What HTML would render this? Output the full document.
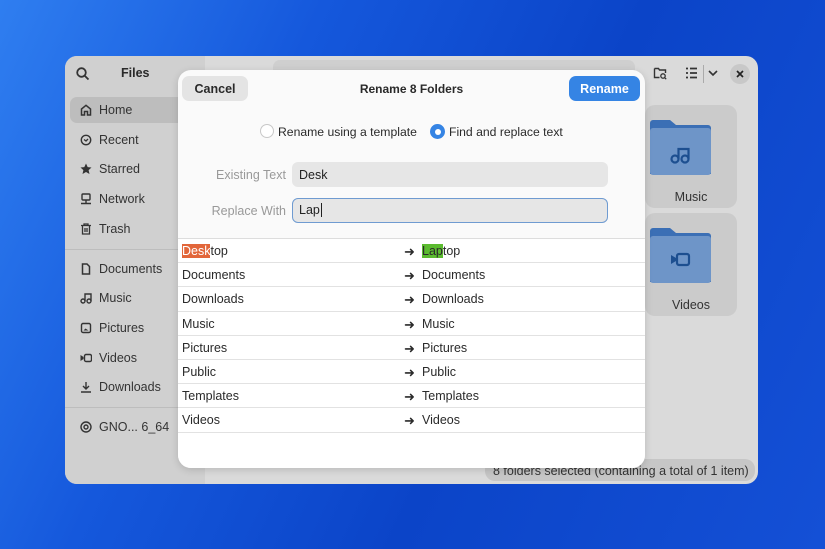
<!DOCTYPE html>
<html><head><style>
*{box-sizing:border-box;margin:0;padding:0}
body{width:825px;height:549px;overflow:hidden;font-family:"Liberation Sans",sans-serif;background:linear-gradient(115deg,#2f7ef0 0%,#1558dc 30%,#0b44c8 60%,#1450d6 100%);position:relative;font-size:12.5px;color:#2a2a2a}
.win{position:absolute;left:65px;top:56px;width:693px;height:428px;border-radius:12px;background:#dadada;overflow:hidden}
.side{position:absolute;left:0;top:0;width:140px;height:100%;background:#d0d0d0}
.si{position:absolute;left:34px;font-size:12.5px;color:#333}
.ic{position:absolute;left:15px;width:12px;height:12px}
.sep{position:absolute;left:0;width:140px;height:1px;background:#bdbdbd}
.tile{position:absolute;left:580px;width:92px;height:103px;border-radius:10px;background:#cbcbcb}
.fold{position:absolute;left:5px;top:12px;width:61px;height:60px}
.tl{position:absolute;width:100%;text-align:center;top:85px;font-size:12.5px;color:#333}
.dlg{position:absolute;left:178px;top:70px;width:467px;height:398px;border-radius:13px;background:#fafafa;overflow:hidden;box-shadow:0 2px 8px rgba(0,0,0,.15)}
.btn{position:absolute;top:6px;height:25px;border-radius:7px;font-weight:bold;font-size:12.5px;text-align:center;line-height:26px}
.lbl{position:absolute;width:108px;text-align:right;color:#999;font-size:12.5px}
.ent{position:absolute;left:114px;width:316px;height:25px;border-radius:6px;background:#e6e6e6;padding-left:7px;line-height:26px;font-size:12.5px;color:#222}
.list{position:absolute;left:0;top:168px;width:467px;height:230px;background:#fff;border-top:1px solid #ddd}
.row{height:24.2px;border-bottom:1px solid #e2e2e2;position:relative;line-height:25px}
.row .a{position:absolute;left:4px}.row .ar{position:absolute;left:226px;font-size:13px}.row .b{position:absolute;left:244px}
</style></head><body>
<div class="win">
<div class="side">
<svg style="position:absolute;left:11px;top:11px" width="14" height="14" viewBox="0 0 14 14"><circle cx="5.5" cy="5.5" r="4.3" fill="none" stroke="#333" stroke-width="1.8"/><path d="M8.6 8.6L12.5 12.5" stroke="#333" stroke-width="1.8"/></svg>
<div style="position:absolute;left:56px;top:10px;font-weight:bold;font-size:12.5px">Files</div>
<div style="position:absolute;left:5px;top:41px;width:135px;height:26px;border-radius:7px;background:#bdbdbd"></div>
<svg class="ic" style="top:48px" viewBox="0 0 12 12"><path d="M1.5 11V5L6 1.3 10.5 5V11H7.5V7.5h-3V11z" fill="none" stroke="#333" stroke-width="1.5"/></svg><div class="si" style="top:47px">Home</div>
<svg class="ic" style="top:78px" viewBox="0 0 12 12"><circle cx="6" cy="6" r="4.7" fill="none" stroke="#333" stroke-width="1.4"/><path d="M4 5.5l2 1.5 2-2" fill="none" stroke="#333" stroke-width="1.3"/></svg><div class="si" style="top:77px">Recent</div>
<svg class="ic" style="top:107px" viewBox="0 0 12 12"><path d="M6 .5l1.7 3.6 3.8.4-2.9 2.6.9 3.9L6 9 2.5 11l.9-3.9L.5 4.5l3.8-.4z" fill="#333"/></svg><div class="si" style="top:106px">Starred</div>
<svg class="ic" style="top:137px" viewBox="0 0 12 12"><rect x="2" y="1" width="8" height="6" rx="1" fill="none" stroke="#333" stroke-width="1.4"/><path d="M6 7v3M1 10.5h10" stroke="#333" stroke-width="1.4"/></svg><div class="si" style="top:136px">Network</div>
<svg class="ic" style="top:167px" viewBox="0 0 12 12"><path d="M1 2.5h10M4 2.5V1h4v1.5M2.5 3v8h7V3M5 5v4M7 5v4" fill="none" stroke="#333" stroke-width="1.3"/></svg><div class="si" style="top:166px">Trash</div>
<div class="sep" style="top:193px"></div>
<svg class="ic" style="top:207px" viewBox="0 0 12 12"><path d="M2.5 1h4.5l2.5 2.5V11h-7z" fill="none" stroke="#333" stroke-width="1.5"/></svg><div class="si" style="top:206px">Documents</div>
<svg class="ic" style="top:236px" viewBox="0 0 12 12"><circle cx="3" cy="9" r="2" fill="none" stroke="#333" stroke-width="1.4"/><circle cx="9" cy="9" r="2" fill="none" stroke="#333" stroke-width="1.4"/><path d="M5 9V2h6v7" fill="none" stroke="#333" stroke-width="1.4"/></svg><div class="si" style="top:235px">Music</div>
<svg class="ic" style="top:266px" viewBox="0 0 12 12"><rect x="1.5" y="1.5" width="9" height="9" rx="1.5" fill="none" stroke="#333" stroke-width="1.4"/><path d="M3.5 8.5l2-2 3 2z" fill="#333"/></svg><div class="si" style="top:265px">Pictures</div>
<svg class="ic" style="top:296px" viewBox="0 0 12 12"><rect x="4.5" y="2.5" width="7" height="7" rx="1.5" fill="none" stroke="#333" stroke-width="1.4"/><path d="M0.5 3v6l3-2V5z" fill="#333"/></svg><div class="si" style="top:295px">Videos</div>
<svg class="ic" style="top:325px" viewBox="0 0 12 12"><path d="M6 1v7M3 5l3 3 3-3M1 11h10" fill="none" stroke="#333" stroke-width="1.4"/></svg><div class="si" style="top:324px">Downloads</div>
<div class="sep" style="top:351px"></div>
<svg class="ic" style="top:365px" viewBox="0 0 12 12"><circle cx="6" cy="6" r="5" fill="none" stroke="#333" stroke-width="1.4"/><circle cx="6" cy="6" r="2" fill="none" stroke="#333" stroke-width="1.4"/></svg><div class="si" style="top:364px">GNO... 6_64</div>
</div>
<div style="position:absolute;left:208px;top:4px;width:362px;height:26px;border-radius:7px;background:#cfcfcf"></div>
<svg style="position:absolute;left:588px;top:10px" width="14" height="14" viewBox="0 0 14 14"><path d="M1.5 2.5h4l1 1.5h6v3M1.5 2.5v9h5" fill="none" stroke="#333" stroke-width="1.4"/><circle cx="10" cy="10" r="2.2" fill="none" stroke="#333" stroke-width="1.3"/><path d="M11.6 11.6l1.6 1.6" stroke="#333" stroke-width="1.3"/></svg>
<svg style="position:absolute;left:620px;top:11px" width="13" height="12" viewBox="0 0 13 12"><path d="M1 1.5h2M1 6h2M1 10.5h2M5 1.5h7M5 6h7M5 10.5h7" stroke="#333" stroke-width="1.8"/></svg>
<div style="position:absolute;left:638px;top:9px;width:1px;height:18px;background:#aaa"></div>
<svg style="position:absolute;left:643px;top:14px" width="10" height="7" viewBox="0 0 10 7"><path d="M1 1l4 4 4-4" fill="none" stroke="#333" stroke-width="1.6"/></svg>
<div style="position:absolute;left:665px;top:8px;width:20px;height:20px;border-radius:50%;background:#c8c8c8"></div>
<svg style="position:absolute;left:671px;top:14px" width="8" height="8" viewBox="0 0 8 8"><path d="M1 1l6 6M7 1L1 7" stroke="#222" stroke-width="1.7"/></svg>
<div class="tile" style="top:49px"><svg class="fold" viewBox="0 0 61 60"><path d="M0 6a3 3 0 0 1 3-3h17l6 5h32a3 3 0 0 1 3 3v46H0z" fill="#3b6fb5"/><rect x="0" y="11" width="61" height="47" rx="3" fill="#6e95c8"/><circle cx="25" cy="42" r="3.5" fill="none" stroke="#1d4f90" stroke-width="2.2"/><circle cx="35" cy="42" r="3.5" fill="none" stroke="#1d4f90" stroke-width="2.2"/><path d="M28.5 42V32h10v10" fill="none" stroke="#1d4f90" stroke-width="2.2"/></svg><div class="tl">Music</div></div>
<div class="tile" style="top:157px"><svg class="fold" viewBox="0 0 61 60"><path d="M0 6a3 3 0 0 1 3-3h17l6 5h32a3 3 0 0 1 3 3v46H0z" fill="#3b6fb5"/><rect x="0" y="11" width="61" height="47" rx="3" fill="#6e95c8"/><rect x="27" y="29" width="12" height="11" rx="2" fill="none" stroke="#1d4f90" stroke-width="2.2"/><path d="M21 30v9l5-3v-3z" fill="#1d4f90"/></svg><div class="tl">Videos</div></div>
<div style="position:absolute;left:420px;top:403px;width:270px;height:22px;border-radius:10px;background:#c6c6c6;color:#333;line-height:24px;padding-left:8px;font-size:12.5px">8 folders selected  (containing a total of 1 item)</div>
</div>
<div class="dlg">
<div class="btn" style="left:4px;width:66px;background:#e4e4e4;color:#2a2a2a">Cancel</div>
<div style="position:absolute;left:0;width:100%;top:12px;text-align:center;font-weight:bold;font-size:12px">Rename 8 Folders</div>
<div class="btn" style="left:391px;width:71px;background:#3584e4;color:#fff">Rename</div>
<div style="position:absolute;left:82px;top:54px;width:14px;height:14px;border-radius:50%;border:1.5px solid #c8c8c8;background:#fff"></div>
<div style="position:absolute;left:100px;top:55px;font-size:12.2px">Rename using a template</div>
<div style="position:absolute;left:252px;top:54px;width:15px;height:15px;border-radius:50%;background:#3584e4"><div style="position:absolute;left:4.5px;top:4.5px;width:6px;height:6px;border-radius:50%;background:#fff"></div></div>
<div style="position:absolute;left:271px;top:55px;font-size:12.2px">Find and replace text</div>
<div class="lbl" style="top:98px">Existing Text</div>
<div class="ent" style="top:92px">Desk</div>
<div class="lbl" style="top:134px">Replace With</div>
<div class="ent" style="top:128px;border:1.5px solid #6f9bd1;line-height:23px;padding-left:6px">Lap<span style="border-left:1px solid #222;margin-left:1px"></span></div>
<div class="list">
<div class="row"><span class="a"><span style="background:#e2663a;color:#fff">Desk</span>top</span><span class="ar">➜</span><span class="b"><span style="background:#5bbb2f">Lap</span>top</span></div>
<div class="row"><span class="a">Documents</span><span class="ar">➜</span><span class="b">Documents</span></div>
<div class="row"><span class="a">Downloads</span><span class="ar">➜</span><span class="b">Downloads</span></div>
<div class="row"><span class="a">Music</span><span class="ar">➜</span><span class="b">Music</span></div>
<div class="row"><span class="a">Pictures</span><span class="ar">➜</span><span class="b">Pictures</span></div>
<div class="row"><span class="a">Public</span><span class="ar">➜</span><span class="b">Public</span></div>
<div class="row"><span class="a">Templates</span><span class="ar">➜</span><span class="b">Templates</span></div>
<div class="row"><span class="a">Videos</span><span class="ar">➜</span><span class="b">Videos</span></div>
</div>
</div>
</body></html>
